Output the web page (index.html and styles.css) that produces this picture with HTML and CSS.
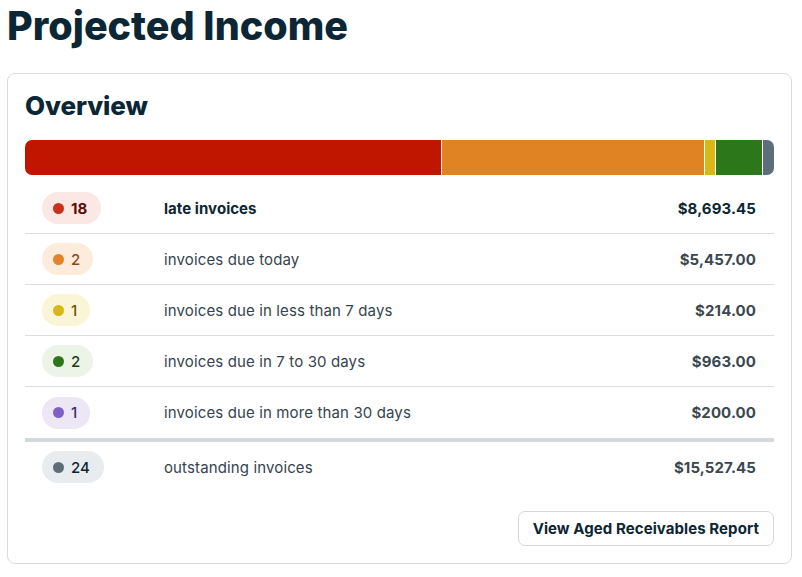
FILE: index.html
```html
<!DOCTYPE html>
<html lang="en">
<head>
<meta charset="utf-8">
<title>Projected Income</title>
<link rel="stylesheet" href="styles.css">
</head>
<body>
<main class="page">
  <h1 class="title">Projected Income</h1>
  <section class="card">
    <h2 class="card-title">Overview</h2>
    <div class="bar">
      <span class="seg seg-red" style="width:55.7%"></span>
      <span class="seg seg-orange" style="width:35.14%"></span>
      <span class="seg seg-yellow" style="width:1.45%"></span>
      <span class="seg seg-green" style="width:6.2%"></span>
      <span class="seg seg-gray" style="flex:1"></span>
    </div>
    <div class="rows">
      <div class="row row-strong">
        <div class="cell-badge"><span class="badge badge-red"><span class="dot"></span>18</span></div>
        <div class="label">late invoices</div>
        <div class="amount">$8,693.45</div>
      </div>
      <div class="row">
        <div class="cell-badge"><span class="badge badge-orange"><span class="dot"></span>2</span></div>
        <div class="label">invoices due today</div>
        <div class="amount">$5,457.00</div>
      </div>
      <div class="row">
        <div class="cell-badge"><span class="badge badge-yellow"><span class="dot"></span>1</span></div>
        <div class="label">invoices due in less than 7 days</div>
        <div class="amount">$214.00</div>
      </div>
      <div class="row">
        <div class="cell-badge"><span class="badge badge-green"><span class="dot"></span>2</span></div>
        <div class="label">invoices due in 7 to 30 days</div>
        <div class="amount">$963.00</div>
      </div>
      <div class="row row-last">
        <div class="cell-badge"><span class="badge badge-purple"><span class="dot"></span>1</span></div>
        <div class="label">invoices due in more than 30 days</div>
        <div class="amount">$200.00</div>
      </div>
      <div class="row row-total">
        <div class="cell-badge"><span class="badge badge-gray"><span class="dot"></span>24</span></div>
        <div class="label">outstanding invoices</div>
        <div class="amount">$15,527.45</div>
      </div>
    </div>
    <div class="actions">
      <button class="btn" type="button">View Aged Receivables Report</button>
    </div>
  </section>
</main>
</body>
</html>
```

FILE: styles.css
```css
* { box-sizing: border-box; }
html, body { margin: 0; padding: 0; background: #ffffff; }
body {
  font-family: Inter, "Noto Sans", "Liberation Sans", sans-serif;
  color: #0c2633;
}
.page {
  padding: 0 10px 0 7px;
}
.title {
  margin: 0;
  padding-top: 2px;
  font-size: 39.5px;
  line-height: 48px;
  font-weight: 800;
  letter-spacing: 0;
  color: #0b2634;
}
.card {
  margin-top: 23px;
  border: 1px solid #d9dcde;
  border-radius: 8px;
  padding: 16px 17px 17px 17px;
}
.card-title {
  margin: 0;
  font-size: 26px;
  line-height: 32px;
  font-weight: 800;
  letter-spacing: -0.1px;
  color: #0b2634;
}
.bar {
  margin-top: 18px;
  height: 35px;
  display: flex;
  border-radius: 7px;
  overflow: hidden;
  margin-bottom: 8px;
}
.seg { display: block; height: 100%; border-right: 1px solid #ffffff; }
.seg:last-child { border-right: 0; }
.seg-red { background: #c01600; }
.seg-orange { background: #df8323; }
.seg-yellow { background: #d9b714; }
.seg-green { background: #2d771b; }
.seg-gray { background: #5d6e7a; }

.row {
  display: grid;
  grid-template-columns: 122px 1fr auto;
  align-items: center;
  height: 51px;
  padding: 0 18px 0 17px;
  border-bottom: 1px solid #d9dee0;
  font-size: 15px;
}
.row-last { height: 55px; border-bottom: 4px solid #d3dadd; }
.row-total { height: 50px; border-bottom: 0; }
.label { color: #36444e; letter-spacing: 0.13px; }
.amount { font-weight: 700; color: #3b4750; text-align: right; letter-spacing: 0.1px; }
.row-strong .label { font-weight: 700; color: #0c2633; letter-spacing: 0.05px; }
.row-strong .amount { color: #0c2633; }
.row-total .amount { color: #3b4750; }

.cell-badge { display: flex; }
.badge {
  display: inline-flex;
  align-items: center;
  gap: 7px;
  height: 32px;
  padding: 0 13px 0 11px;
  border-radius: 16px;
  font-size: 15px;
  font-weight: 500;
}
.dot { width: 11px; height: 11px; border-radius: 50%; display: inline-block; }
.badge-red { background: #fbe7e3; color: #5b0d05; font-weight: 700; padding-right: 14px; }
.badge-red .dot { background: #c8321d; }
.badge-orange { background: #fdebdc; color: #8a4814; }
.badge-orange .dot { background: #e2842a; }
.badge-yellow { background: #fbf5d7; color: #6a5600; }
.badge-yellow .dot { background: #d8b814; }
.badge-green { background: #ecf4e8; color: #1b3c12; }
.badge-green .dot { background: #2d771b; }
.badge-purple { background: #ece6f5; color: #3d2b6e; }
.badge-purple .dot { background: #8061c2; }
.badge-gray { background: #e8ecee; color: #0c2633; padding-right: 14px; }
.badge-gray .dot { background: #5d6e7a; }

.actions {
  display: flex;
  justify-content: flex-end;
  margin-top: 19px;
}
.btn {
  font-family: inherit;
  height: 35px;
  padding: 0 14px;
  border: 1px solid #d3d8db;
  border-radius: 7px;
  background: #ffffff;
  color: #0c2633;
  font-size: 15px;
  font-weight: 700;
  letter-spacing: 0.08px;
  cursor: pointer;
}
```
